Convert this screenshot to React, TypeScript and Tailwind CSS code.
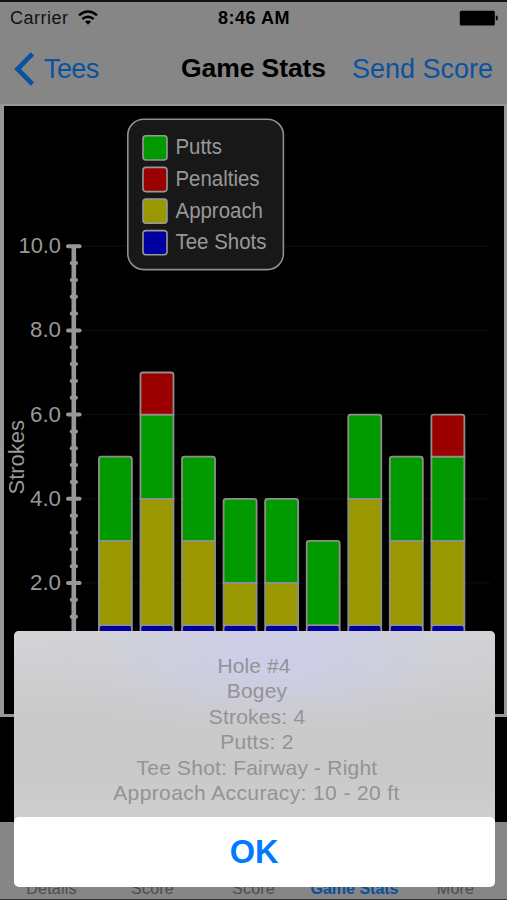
import type { ReactNode } from 'react';

// ─── Data ─────────────────────────────────────────────────────────────────────

type Hole = { tee: number; approach: number; penalties: number; putts: number };

const HOLES: Hole[] = [
  { tee: 1, approach: 2, putts: 2, penalties: 0 },
  { tee: 1, approach: 3, putts: 2, penalties: 1 },
  { tee: 1, approach: 2, putts: 2, penalties: 0 },
  { tee: 1, approach: 1, putts: 2, penalties: 0 },
  { tee: 1, approach: 1, putts: 2, penalties: 0 },
  { tee: 1, approach: 0, putts: 2, penalties: 0 },
  { tee: 1, approach: 3, putts: 2, penalties: 0 },
  { tee: 1, approach: 2, putts: 2, penalties: 0 },
  { tee: 1, approach: 2, putts: 2, penalties: 1 },
];

const COLORS = {
  putts: '#009a00',
  penalties: '#9a0000',
  approach: '#9a9800',
  tee: '#0000a0',
};

const LEGEND = [
  { label: 'Putts', color: COLORS.putts, width: 46.5 },
  { label: 'Penalties', color: COLORS.penalties, width: 84 },
  { label: 'Approach', color: COLORS.approach, width: 87.5 },
  { label: 'Tee Shots', color: COLORS.tee, width: 91 },
];

const DETAILS: [string, string][] = [
  ['Hole #4', 'tracking-[0.1px]'],
  ['Bogey', 'pl-[6px] tracking-[0.2px]'],
  ['Strokes: 4', 'pl-[6px] tracking-[0.2px]'],
  ['Putts: 2', 'pl-[6px] tracking-[0.3px]'],
  ['Tee Shot: Fairway - Right', 'pl-[6px] tracking-[0.2px]'],
  ['Approach Accuracy: 10 - 20 ft', 'pl-[5px] tracking-[0.38px]'],
];

// ─── Chart ────────────────────────────────────────────────────────────────────

const UNIT = 42.1;
const BASE = 563.2;
const yOf = (value: number) => BASE - value * UNIT;

const segmentPath = (x: number, top: number, bottom: number, rounded: boolean) => {
  const r = rounded ? 2.5 : 0;
  const w = 33;
  return `M${x} ${bottom}V${top + r}Q${x} ${top} ${x + r} ${top}H${x + w - r}Q${x + w} ${top} ${x + w} ${top + r}V${bottom}Z`;
};

const Bar = ({ hole, x }: { hole: Hole; x: number }) => {
  const parts = [
    { value: hole.tee, color: COLORS.tee },
    { value: hole.approach, color: COLORS.approach },
    { value: hole.putts, color: COLORS.putts },
    { value: hole.penalties, color: COLORS.penalties },
  ].filter((p) => p.value > 0);

  let total = 0;
  return (
    <g stroke="#8f8f8a" strokeWidth="1.8">
      {parts.map((p, i) => {
        const from = total;
        total += p.value;
        return (
          <path
            key={p.color}
            d={segmentPath(x, yOf(total), yOf(from), i === 0 || i === parts.length - 1)}
            fill={p.color}
          />
        );
      })}
    </g>
  );
};

const Chart = () => (
  <svg
    width="507"
    height="613"
    viewBox="0 0 507 613"
    className="block shrink-0"
    fontFamily='"Liberation Sans", Arial, sans-serif'
  >
    <rect width="507" height="613" fill="#989898" />
    <rect x="4" y="2" width="500" height="608" fill="#000" />

    {/* grid */}
    {[2, 4, 6, 8, 10].map((v) => (
      <path key={v} d={`M82 ${yOf(v)}H490`} stroke="#0a0a0a" strokeWidth="1.5" />
    ))}

    {/* axis */}
    <g stroke="#989898" strokeLinecap="round">
      <path d={`M73.8 ${yOf(10)}V${BASE}`} strokeWidth="4.6" strokeLinecap="butt" />
      {Array.from({ length: 26 }, (_, i) => (
        <path
          key={i}
          d={i % 5 === 0 ? `M68 ${yOf(i * 0.4)}H79.6` : `M71.7 ${yOf(i * 0.4)}H76`}
          strokeWidth="4"
        />
      ))}
    </g>
    {[2, 4, 6, 8, 10].map((v) => (
      <text
        key={v}
        x={v === 10 ? 18.5 : 30}
        y={yOf(v) + 7}
        fontSize="22"
        fill="#989898"
        textLength={v === 10 ? 42.5 : 31}
        lengthAdjust="spacingAndGlyphs"
      >
        {v.toFixed(1)}
      </text>
    ))}
    <text
      transform="translate(24.2 390.5) rotate(-90)"
      fontSize="21.5"
      fill="#989898"
      textLength="74.5"
      lengthAdjust="spacingAndGlyphs"
    >
      Strokes
    </text>

    {HOLES.map((hole, i) => (
      <Bar key={i} hole={hole} x={98.9 + i * 41.56} />
    ))}

    {/* legend */}
    <rect x="127.8" y="15.2" width="155.6" height="150.4" rx="16" fill="#181818" stroke="#8f8f8f" strokeWidth="1.6" />
    {LEGEND.map((item, i) => (
      <g key={item.label}>
        <rect
          x="143"
          y={31.8 + i * 31.6}
          width="24"
          height="24.2"
          rx="3"
          fill={item.color}
          stroke="#989898"
          strokeWidth="1.6"
        />
        <text
          x="175.5"
          y={50.3 + i * 31.6}
          fontSize="21.5"
          fill="#989898"
          textLength={item.width}
          lengthAdjust="spacingAndGlyphs"
        >
          {item.label}
        </text>
      </g>
    ))}
  </svg>
);

// ─── Bars ─────────────────────────────────────────────────────────────────────

const StatusBar = () => (
  <div className="grid h-[34px] grid-cols-3 items-center border-t-2 border-[#111] pr-[9px] pl-[10px] text-[18px] text-black">
    <div className="flex items-center gap-[9px]">
      <span className="tracking-[0.5px] text-[#111]">Carrier</span>
      <svg width="20" height="16" viewBox="0 0 20 16" fill="none" stroke="#000" strokeWidth="2.4">
        <path d="M1 5.3Q10-2.2 19 5.3" />
        <path d="M4.3 9Q10 4.5 15.7 9" />
        <path d="M7 11.6Q10 9.2 13 11.6L10 14.8Z" fill="#000" stroke="none" />
      </svg>
    </div>
    <span className="text-center text-[18px] font-bold tracking-[0.55px]">8:46 AM</span>
    <svg width="39" height="16" viewBox="0 0 39 16" className="justify-self-end">
      <rect x="0.8" y="0.8" width="35" height="14.6" rx="1.5" fill="#000" />
      <path d="M36.8 5.2Q39 6 39 8T36.8 10.8Z" fill="#000" />
    </svg>
  </div>
);

const NavBar = () => (
  <div className="flex h-[70px] items-center justify-between pr-[14px] pl-[14px] text-[27px] text-[#0a529f]">
    <div className="flex w-[160px] items-center gap-[9px]">
      <svg width="21" height="34" viewBox="0 0 21 34" fill="none" stroke="#0a529f" strokeWidth="4.8">
        <path d="M18.4 1.8L3.6 17L18.4 32.2" />
      </svg>
      <span className="tracking-[-0.6px]">Tees</span>
    </div>
    <span className="text-[26.5px] font-bold tracking-[-0.1px] text-black">Game Stats</span>
    <span className="w-[160px] text-right whitespace-nowrap">Send Score</span>
  </div>
);

const Tab = ({ active, children }: { active?: boolean; children: ReactNode }) => (
  <span
    className={
      active
        ? 'w-[101px] text-center text-[16px] leading-[20px] font-bold text-[#0a4f9c]'
        : 'w-[101px] text-center text-[16px] leading-[20px] tracking-[0.2px] text-[#4c4c4c]'
    }
  >
    {children}
  </span>
);

const TabBar = () => (
  <div className="flex h-[78px] items-end justify-center border-b border-[#333] bg-[#868686]">
    <Tab>Details</Tab>
    <Tab>Score</Tab>
    <Tab>Score</Tab>
    <Tab active>Game Stats</Tab>
    <Tab>More</Tab>
  </div>
);

// ─── Hole sheet ───────────────────────────────────────────────────────────────

const HoleSheet = () => (
  <div className="absolute top-[631px] left-[13.5px] w-[481px] overflow-hidden rounded-[5px] bg-[#c9c9c9]">
    <div className="h-[186px] bg-[radial-gradient(ellipse_230px_80px_at_54%_26px,#cdcdea_0%,#cdcde6b0_40%,#cdcddc40_75%,#cdcdd600_100%),linear-gradient(to_bottom,#d3d3d6_0%,#cacacb_45%,#c9c9c9_75%,#cecece_100%)] pt-[22px] text-center text-[21px] leading-[25.4px] text-[#939396]">
      {DETAILS.map(([line, spacing]) => (
        <div key={line} className={spacing}>
          {line}
        </div>
      ))}
    </div>
    <button className="block h-[70px] w-full rounded-[5px] bg-white text-[32.5px] font-bold text-[#007aff]">
      OK
    </button>
  </div>
);

export default function App() {
  return (
    <div className="relative flex h-[900px] w-[507px] flex-col overflow-hidden bg-black font-['Liberation_Sans',Arial,sans-serif]">
      <div className="bg-[#868686]">
        <StatusBar />
        <NavBar />
      </div>
      <Chart />
      <div className="grow" />
      <TabBar />
      <HoleSheet />
    </div>
  );
}
